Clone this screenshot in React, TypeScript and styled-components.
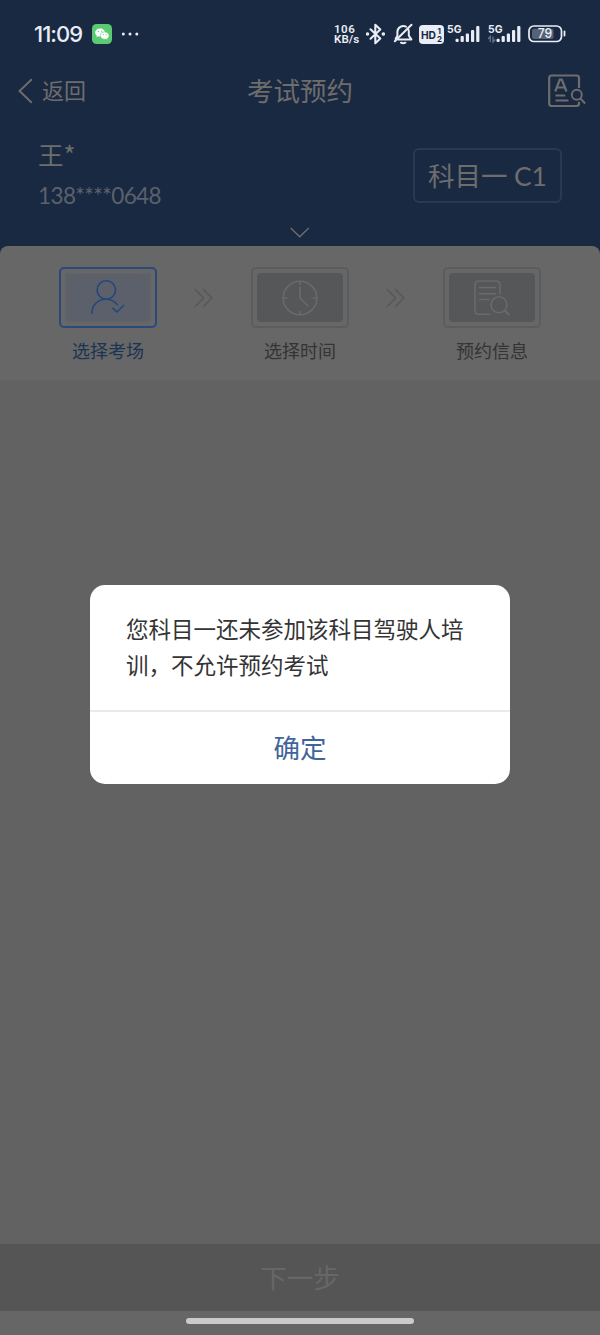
import React from "react";
import styled, { createGlobalStyle } from "styled-components";

const Global = createGlobalStyle`
  * { box-sizing: border-box; }
  body { margin: 0; background: #626263; }
  svg { display: block; flex: none; }
  button { border: 0; background: none; padding: 0; font: inherit; color: inherit; }
`;

const Screen = styled.div`
  position: relative;
  display: flex;
  flex-direction: column;
  width: 600px;
  height: 1335px;
  overflow: hidden;
  background: #626263;
  font-family: Lato, "Noto Sans CJK SC", sans-serif;
`;

const Header = styled.header`
  height: 256px;
  flex: none;
  background: #1a2942;
  color: #6e6d6c;
`;

const StatusBar = styled.div`
  display: flex;
  align-items: center;
  height: 68px;
  padding: 0 34px;
  color: #e9edf5;
`;

const Clock = styled.span`
  width: 58px;
  font: 500 22px/28px Inter, sans-serif;
  letter-spacing: -0.95px;
`;

const StatusIcons = styled.div`
  display: flex;
  align-items: center;
  margin-left: auto;
`;

const Spacer = styled.i<{ $w: number }>`
  width: ${(p) => p.$w}px;
  flex: none;
`;

const Speed = styled.div`
  display: flex;
  flex-direction: column;
  width: 27px;
  font: 600 11.5px/10px Roboto, sans-serif;
  white-space: nowrap;
`;

const SpeedLine = styled.span<{ $spacing: number }>`
  height: 10px;
  letter-spacing: ${(p) => p.$spacing}px;
`;

const NavBar = styled.nav`
  display: grid;
  grid-template-columns: 148px 1fr 152px;
  align-items: center;
  height: 46px;
  padding: 0 14px 0 18px;
`;

const Back = styled.button`
  display: flex;
  align-items: center;
  gap: 9px;
  font-size: 22px;
  line-height: 30px;
`;

const Title = styled.h1`
  margin: 0;
  font-size: 26.5px;
  font-weight: 400;
  line-height: 36px;
  text-align: center;
`;

const NavAction = styled.div`
  display: flex;
  justify-content: flex-end;
`;

const Profile = styled.section`
  display: flex;
  justify-content: space-between;
  height: 108px;
  padding: 22px 38px 0 38px;
`;

const Name = styled.div`
  font-size: 25.5px;
  line-height: 36px;
  font-family: "Noto Sans CJK SC", sans-serif;
`;

const Phone = styled.div`
  margin-top: 8px;
  font-size: 22.5px;
  line-height: 32px;
  letter-spacing: -0.6px;
  color: #5a616b;
`;

const Subject = styled.div`
  display: flex;
  align-items: center;
  justify-content: center;
  width: 149px;
  height: 55px;
  margin-top: 12px;
  border: 2px solid #2b394f;
  border-radius: 6px;
  font-size: 26.5px;
  line-height: 36px;
  letter-spacing: -0.1px;
  white-space: nowrap;
`;

const Expand = styled.div`
  display: flex;
  justify-content: center;
  padding-top: 5px;
`;

const Steps = styled.section`
  position: relative;
  display: flex;
  justify-content: space-between;
  flex: none;
  height: 134px;
  margin-top: -10px;
  padding: 21px 59px 0;
  border-radius: 8px 8px 0 0;
  background: #676767;
`;

const Step = styled.div<{ $active?: boolean }>`
  display: flex;
  flex-direction: column;
  align-items: center;
  width: 98px;
  color: ${(p) => (p.$active ? "#1d3354" : "#343434")};
  font-size: 18px;
  line-height: 26px;
  white-space: nowrap;
`;

const StepFrame = styled.div<{ $active?: boolean }>`
  width: 98px;
  height: 61px;
  margin-bottom: 10px;
  padding: 4px;
  border: 2px solid ${(p) => (p.$active ? "#2a4a79" : "#5b5c5c")};
  border-radius: 5px;
`;

const StepTile = styled.div<{ $active?: boolean }>`
  display: flex;
  align-items: center;
  justify-content: center;
  height: 100%;
  border-radius: 4px;
  background: ${(p) => (p.$active ? "#5c606a" : "#555759")};
  box-shadow: ${(p) => (p.$active ? "inset 0 0 5px #656668" : "none")};
`;

const Arrow = styled.div`
  padding-top: 21px;
`;

const Content = styled.main`
  flex: 1;
`;

const NextButton = styled.button`
  flex: none;
  height: 67px;
  background: #555;
  color: #676767;
  font-size: 26.5px;
  line-height: 36px;
`;

const HomeArea = styled.div`
  display: flex;
  justify-content: center;
  flex: none;
  height: 24px;
  padding-top: 7px;
  background: #666;
`;

const HomeBar = styled.div`
  width: 228px;
  height: 6px;
  border-radius: 3px;
  background: #cacaca;
`;

const DialogLayer = styled.div`
  position: absolute;
  inset: 0;
  display: flex;
  align-items: flex-start;
  justify-content: center;
  padding-top: 584.5px;
`;

const Dialog = styled.div`
  width: 420px;
  height: 199.5px;
  border-radius: 15px;
  overflow: hidden;
  background: #fff;
`;

const Message = styled.p`
  height: 127.5px;
  margin: 0;
  padding: 27px 36px 0;
  border-bottom: 2px solid #e9e9e9;
  color: #343434;
  font-size: 22.5px;
  line-height: 36px;
  white-space: nowrap;
`;

const Confirm = styled.button`
  width: 100%;
  height: 72px;
  color: #3f659b;
  font-size: 26.5px;
  line-height: 36px;
`;

const WeChat = () => (
  <svg width="20" height="20" viewBox="0 0 20 20">
    <rect width="20" height="20" rx="4.5" fill="#5cca73" />
    <path d="M8 4.400c-2.800 0-4.900 1.800-4.900 4.100 0 1.300.7 2.400 1.800 3.200l-.4 1.500 1.800-.9c.6.2 1.200.3 1.800.3 2.800 0 4.900-1.800 4.900-4.100S10.800 4.400 8 4.400z" fill="#fff" />
    <path d="M12.700 7.900c-2.500 0-4.400 1.600-4.400 3.700s1.900 3.700 4.400 3.700c.5 0 1-.1 1.500-.2l1.600.8-.4-1.400c1-.7 1.600-1.700 1.600-2.900 0-2.100-1.900-3.700-4.300-3.700z" fill="#fff" stroke="#5cca73" strokeWidth=".6" />
    <g fill="#5cca73">
      <circle cx="6.400" cy="7.500" r=".65" /><circle cx="9.700" cy="7.200" r=".65" />
      <circle cx="11.300" cy="10.600" r=".55" /><circle cx="14.100" cy="10.600" r=".55" />
    </g>
  </svg>
);

const Dots = () => (
  <svg width="18" height="4" viewBox="0 0 18 4" fill="currentColor">
    <circle cx="2.300" cy="2" r="1.500" /><circle cx="9" cy="2" r="1.500" /><circle cx="15.800" cy="2" r="1.500" />
  </svg>
);

const Bluetooth = () => (
  <svg width="19" height="22" viewBox="0 0 19 22" fill="none" stroke="currentColor" strokeWidth="2.100" strokeLinejoin="round" strokeLinecap="round">
    <path d="M4.500 6.300l9.800 9.200-5 4.700V1.800l5 4.700-9.800 9.200" />
    <circle cx="1.500" cy="11" r=".7" fill="currentColor" /><circle cx="17.300" cy="11" r=".7" fill="currentColor" />
  </svg>
);

const Muted = () => (
  <svg width="20" height="22" viewBox="0 0 20 22" fill="none" stroke="currentColor" strokeWidth="2" strokeLinejoin="round" strokeLinecap="round">
    <path d="M13 3.600A6 6 0 0 0 4.400 8.600v4.200L2.600 15.800M15 5.600c.5 1 .8 2 .8 3v4l2.600 3.800H5" />
    <path d="M18.500 1.700L1.800 18.200" />
    <path d="M8 19.700q2.200 1.200 4.400 0" />
  </svg>
);

const Hd = () => (
  <svg width="25" height="19" viewBox="0 0 25 19">
    <rect width="25" height="19" rx="4" fill="currentColor" />
    <g fill="#1a2942" fontFamily="Inter, sans-serif" fontWeight="700">
      <text x="2" y="13.500" fontSize="11" textLength="15" lengthAdjust="spacingAndGlyphs">HD</text>
      <text x="18.600" y="8.700" fontSize="8">1</text>
      <text x="18" y="16.700" fontSize="8">2</text>
    </g>
  </svg>
);

const Signal = ({ data }: { data?: boolean }) => (
  <svg width="34" height="20" viewBox="0 0 34 20" fill="currentColor">
    <text x="0" y="9" fontSize="10.800" fontWeight="700" fontFamily="Inter, sans-serif" textLength="14.500" lengthAdjust="spacingAndGlyphs">5G</text>
    <rect x="8.500" y="14.700" width="3.200" height="3.300" rx="1.200" />
    <rect x="13.600" y="12" width="3.200" height="6" rx="1" />
    <rect x="18.800" y="9.500" width="3.200" height="8.500" rx="1" />
    <rect x="24" y="6" width="3.200" height="12" rx="1" />
    <rect x="29.200" y="2" width="3.200" height="16" rx="1" />
    {data && <path d="M2.300 18V12.500L0 15M5 12.500V18l2.300-2.500" fill="none" stroke="#66758c" strokeWidth="1.300" />}
  </svg>
);

const Battery = () => (
  <svg width="38" height="18" viewBox="0 0 38 18">
    <rect x="1" y="1" width="32.500" height="15.500" rx="5" fill="none" stroke="currentColor" strokeWidth="1.700" />
    <rect x="4" y="3.700" width="21.500" height="10.200" rx="2" fill="#566276" />
    <path d="M36.500 6.500v4" stroke="currentColor" strokeWidth="1.800" strokeLinecap="round" />
    <text x="9.800" y="13.200" fontSize="12.500" fontWeight="500" fontFamily="Inter, sans-serif" fill="currentColor" textLength="14.500" lengthAdjust="spacingAndGlyphs">79</text>
  </svg>
);

const BackIcon = () => (
  <svg width="15" height="26" viewBox="0 0 15 26" fill="none" stroke="currentColor" strokeWidth="1.900">
    <path d="M13.800 1.200L1.500 13l12.300 11.800" />
  </svg>
);

const RecordIcon = () => (
  <svg width="38" height="34" viewBox="0 0 38 34" fill="none" stroke="currentColor" strokeWidth="2.200">
    <path d="M31 14V4q0-2.500-2.500-2.500h-25Q1.200 1.500 1.200 4v25.500q0 2.500 2.300 2.500h25q2.500 0 2.500-2.500v-1.800" />
    <path d="M7.200 17.500L11.800 5.500h2l4.700 12M8.800 13.500h8M7.500 21.500h9.700M7.500 26.500h13" />
    <circle cx="28.800" cy="20.800" r="5" strokeWidth="1.900" />
    <path d="M32.500 24.500l4.600 5" strokeWidth="1.900" />
  </svg>
);

const PersonIcon = () => (
  <svg width="34" height="36" viewBox="0 0 34 36" fill="none" stroke="#24477a" strokeWidth="1.600" strokeLinecap="round">
    <circle cx="15.300" cy="10" r="9.200" />
    <path d="M.9 33.500C.9 24.500 7.500 19.300 14.500 19.300c5 0 9 1.800 11.700 5.300M22 28.300l4 3.700 6.700-6.700" />
  </svg>
);

const ClockIcon = () => (
  <svg width="36" height="36" viewBox="0 0 36 36" fill="none" stroke="#696a6b" strokeWidth="1.600" strokeLinecap="round">
    <circle cx="18" cy="18" r="16.800" />
    <path d="M18 7v11l8 8M18 1.500v3M18 31.500v3M1.500 18h3.500M31 18h3.500" />
  </svg>
);

const DocumentIcon = () => (
  <svg width="36" height="36" viewBox="0 0 36 36" fill="none" stroke="#696a6b" strokeWidth="1.600" strokeLinecap="round">
    <path d="M26 14V5.500q0-4.500-4-4.500H4.500Q1 1 1 5.500v24.800q0 4 3.500 4h11.500M5.500 7.500h16M5.500 13.800h16M5.500 19.500h9.500" />
    <circle cx="25" cy="24.800" r="8" />
    <path d="M30.800 30.500l4 4" strokeWidth="2" />
  </svg>
);

const Chevrons = () => (
  <svg width="20" height="20" viewBox="0 0 20 20" fill="none" stroke="#565757" strokeWidth="1.400">
    <path d="M1 1.200l8.700 8.800L1 18.800M9.200 1.200l8.700 8.800-8.700 8.800" />
  </svg>
);

export default function App() {
  return (
    <Screen>
      <Global />
      <Header>
        <StatusBar>
          <Clock>11:09</Clock>
          <WeChat />
          <Spacer $w={9} />
          <Dots />
          <StatusIcons>
            <Speed>
              <SpeedLine $spacing={0.5}>106</SpeedLine>
              <SpeedLine $spacing={0.1}>KB/s</SpeedLine>
            </Speed>
            <Spacer $w={5} />
            <Bluetooth />
            <Spacer $w={8} />
            <Muted />
            <Spacer $w={6} />
            <Hd />
            <Spacer $w={3} />
            <Signal />
            <Spacer $w={7} />
            <Signal data />
            <Spacer $w={6} />
            <Battery />
          </StatusIcons>
        </StatusBar>
        <NavBar>
          <Back><BackIcon />返回</Back>
          <Title>考试预约</Title>
          <NavAction><RecordIcon /></NavAction>
        </NavBar>
        <Profile>
          <div>
            <Name>王*</Name>
            <Phone>138****0648</Phone>
          </div>
          <Subject>科目一 C1</Subject>
        </Profile>
        <Expand>
          <svg width="20" height="11" viewBox="0 0 20 11" fill="none" stroke="currentColor" strokeWidth="1.400">
            <path d="M.7 1l9 8.700L18.800 1" />
          </svg>
        </Expand>
      </Header>
      <Steps>
        <Step $active>
          <StepFrame $active><StepTile $active><PersonIcon /></StepTile></StepFrame>
          选择考场
        </Step>
        <Arrow><Chevrons /></Arrow>
        <Step>
          <StepFrame><StepTile><ClockIcon /></StepTile></StepFrame>
          选择时间
        </Step>
        <Arrow><Chevrons /></Arrow>
        <Step>
          <StepFrame><StepTile><DocumentIcon /></StepTile></StepFrame>
          预约信息
        </Step>
      </Steps>
      <Content />
      <NextButton>下一步</NextButton>
      <HomeArea><HomeBar /></HomeArea>
      <DialogLayer>
        <Dialog role="dialog">
          <Message>您科目一还未参加该科目驾驶人培<br />训，不允许预约考试</Message>
          <Confirm>确定</Confirm>
        </Dialog>
      </DialogLayer>
    </Screen>
  );
}
